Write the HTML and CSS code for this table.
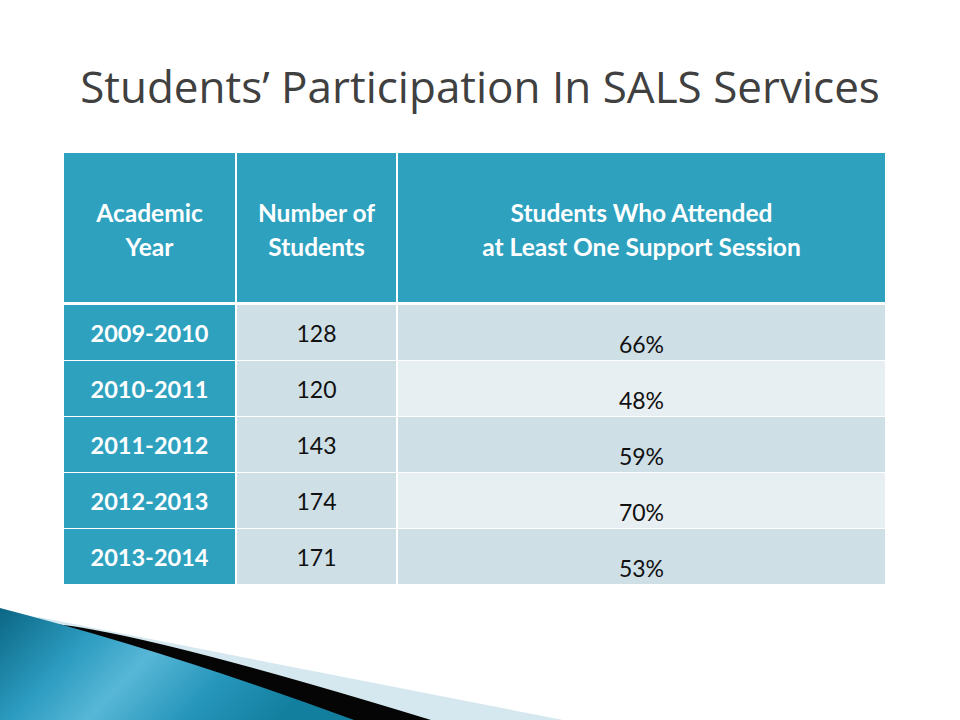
FILE: index.html
```html
<!DOCTYPE html>
<html lang="en">
<head>
<meta charset="utf-8">
<title>Students’ Participation In SALS Services</title>
<link rel="stylesheet" href="styles.css">
</head>
<body>
<div class="slide">
  <h1 class="title">Students’ Participation In SALS Services</h1>
  <div class="table">
    <div class="cell head">Academic<br>Year</div>
    <div class="cell head">Number of<br>Students</div>
    <div class="cell head">Students Who Attended<br>at Least One Support Session</div>

    <div class="cell year">2009-2010</div>
    <div class="cell num">128</div>
    <div class="cell pct odd">66%</div>

    <div class="cell year">2010-2011</div>
    <div class="cell num">120</div>
    <div class="cell pct even">48%</div>

    <div class="cell year">2011-2012</div>
    <div class="cell num">143</div>
    <div class="cell pct odd">59%</div>

    <div class="cell year">2012-2013</div>
    <div class="cell num">174</div>
    <div class="cell pct even">70%</div>

    <div class="cell year">2013-2014</div>
    <div class="cell num">171</div>
    <div class="cell pct odd">53%</div>
  </div>
  <svg class="swoosh" width="600" height="120" viewBox="0 0 600 120" aria-hidden="true">
    <defs>
      <linearGradient id="blueg" x1="0" y1="0" x2="1" y2="0.3">
        <stop offset="0" stop-color="#0b6684"/>
        <stop offset="0.3" stop-color="#2c9cc0"/>
        <stop offset="0.5" stop-color="#58b7d7"/>
        <stop offset="0.75" stop-color="#2595ba"/>
        <stop offset="1" stop-color="#137f9f"/>
      </linearGradient>
    </defs>
    <path d="M38,17 L563,120 L0,120 Z" fill="#d6e8ef"/>
    <path d="M55,24 Q150,34 431,120 L300,120 Z" fill="#050505"/>
    <path d="M0,8 Q170,52 354,120 L0,120 Z" fill="url(#blueg)"/>
  </svg>
</div>
</body>
</html>
```

FILE: styles.css
```css
html, body {
  margin: 0;
  padding: 0;
  background: #ffffff;
}

.slide {
  position: relative;
  width: 960px;
  height: 720px;
  overflow: hidden;
  background: #ffffff;
}

.title {
  margin: 0;
  padding-top: 57px;
  height: 95px;
  box-sizing: border-box;
  text-align: center;
  font-family: "Open Sans", "Liberation Sans", sans-serif;
  font-weight: 400;
  font-size: 44px;
  line-height: 58px;
  color: #404040;
  letter-spacing: 0;
}

.table {
  margin: 58px 0 0 64px;
  width: 821px;
  display: grid;
  grid-template-columns: 171px 159px 487px;
  grid-template-rows: 151px repeat(5, 55px);
  column-gap: 2px;
  row-gap: 1px;
}

.cell {
  display: flex;
  align-items: center;
  justify-content: center;
  text-align: center;
  font-family: "Lato", "Liberation Sans", sans-serif;
  font-size: 20px;
}

.head {
  background: #2ea1bf;
  color: #ffffff;
  font-weight: 700;
  font-size: 24.5px;
  line-height: 34px;
  margin-bottom: 2px;
  padding-top: 4px;
}

.year {
  background: #2ea1bf;
  color: #ffffff;
  font-weight: 700;
  font-size: 23.5px;
}

.num {
  background: #cedfe6;
  color: #111111;
  font-size: 23px;
}

.pct {
  color: #111111;
  font-size: 23px;
  padding-top: 22px;
}

.odd {
  background: #cedfe6;
}

.even {
  background: #e8eff2;
}

.swoosh {
  position: absolute;
  left: 0;
  bottom: 0;
  display: block;
}
```
